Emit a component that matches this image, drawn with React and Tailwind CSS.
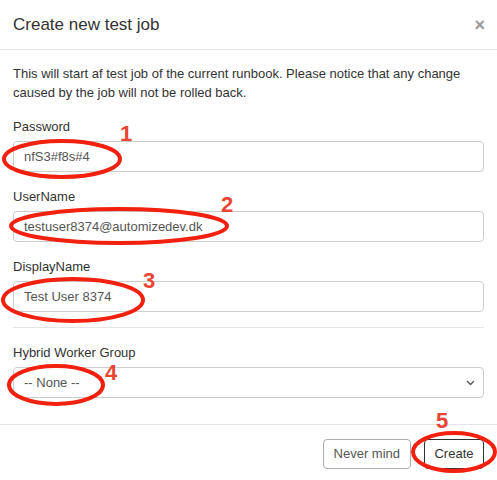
const Field = ({ label, value }) => (
  <div className="mb-[15px]">
    <label className="block text-[13px] leading-[19px] mb-[5px]">{label}</label>
    <div className="h-[31px] border border-[#cccccc] rounded-[4px] px-[10px] flex items-center text-[13px] text-[#555]">
      {value}
    </div>
  </div>
);

const Ring = ({ cx, cy, rx, ry }) => (
  <ellipse cx={cx} cy={cy} rx={rx} ry={ry} fill="none" stroke="#f2200e" strokeWidth="4" />
);

const Num = ({ x, y, n }) => (
  <span
    className="absolute text-[22px] leading-none font-bold text-[#ea4434]"
    style={{ left: x, top: y }}
  >
    {n}
  </span>
);

export default function App() {
  return (
    <div className="relative w-[497px] h-[480px] bg-white text-[#333] font-['Liberation_Sans',Arial,sans-serif] overflow-hidden">
      <div className="h-[50px] border-b border-[#e5e5e5] flex items-center justify-between pl-[13px] pr-[12px]">
        <h4 className="text-[17px] font-normal text-[#333]">Create new test job</h4>
        <span className="text-[18px] font-bold text-[#999] leading-none">×</span>
      </div>

      <div className="px-[13px] pt-[14px] pb-[13px]">
        <p className="text-[13px] leading-[19px] mb-[15px]">
          This will start af test job of the current runbook. Please notice that any change caused by the job will not be rolled back.
        </p>
        <Field label="Password" value="nfS3#f8s#4" />
        <Field label="UserName" value="testuser8374@automizedev.dk" />
        <Field label="DisplayName" value="Test User 8374" />
        <hr className="border-t border-[#e5e5e5] mb-[15px]" />
        <div>
          <label className="block text-[13px] leading-[19px] mb-[5px]">Hybrid Worker Group</label>
          <div className="h-[31px] border border-[#cccccc] rounded-[4px] pl-[10px] pr-[8px] flex items-center justify-between text-[13px] text-[#555]">
            <span>-- None --</span>
            <svg width="9" height="6" viewBox="0 0 9 6">
              <path d="M1 1l3.5 3.5L8 1" fill="none" stroke="#555" strokeWidth="1.3" />
            </svg>
          </div>
        </div>
      </div>

      <div className="mt-[13px] border-t border-[#e5e5e5] pt-[14px] pr-[13px] flex justify-end gap-[13px]">
        <button className="h-[30px] px-[10px] border border-[#adadad] rounded-[4px] text-[13px] text-[#555] bg-white">
          Never mind
        </button>
        <button className="h-[30px] w-[60px] border border-[#333] rounded-[4px] text-[13px] text-[#333] bg-white">
          Create
        </button>
      </div>

      <svg className="absolute inset-0 pointer-events-none" width="497" height="480">
        <Ring cx={62} cy={159} rx={58} ry={18} />
        <Ring cx={119} cy={226} rx={108} ry={17} />
        <Ring cx={73} cy={300} rx={70} ry={21} />
        <Ring cx={56} cy={385} rx={47} ry={19} />
        <Ring cx={454} cy={452} rx={41} ry={19} />
      </svg>
      <Num x={120} y={123} n="1" />
      <Num x={221} y={194} n="2" />
      <Num x={143} y={270} n="3" />
      <Num x={105} y={362} n="4" />
      <Num x={436} y={410} n="5" />
    </div>
  );
}
